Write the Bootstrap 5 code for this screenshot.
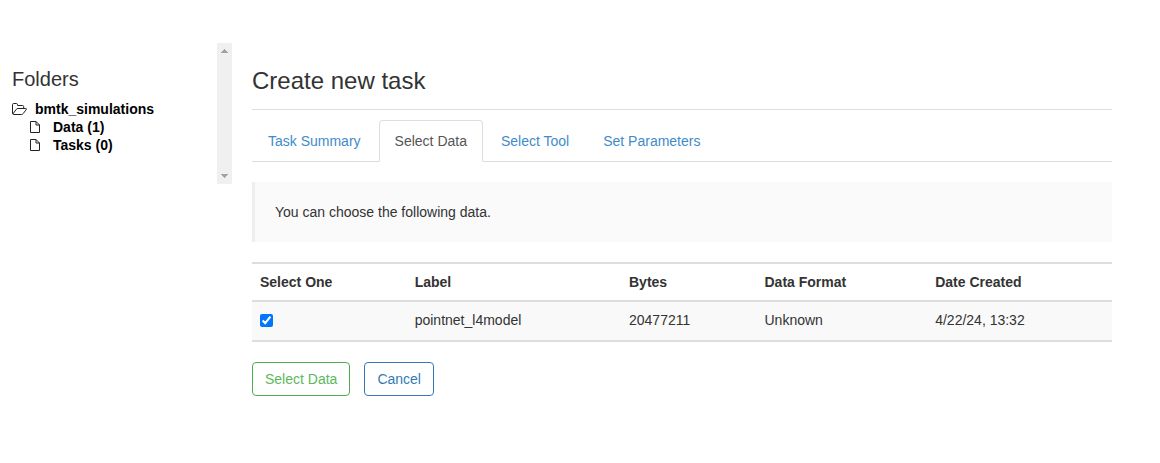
<!DOCTYPE html>
<html lang="en">
<head>
<meta charset="utf-8">
<meta name="viewport" content="width=device-width, initial-scale=1">
<title>Create new task</title>
<link href="https://cdn.jsdelivr.net/npm/bootstrap@5.3.0/dist/css/bootstrap.min.css" rel="stylesheet">
<style>
body{font:14px/20px "Liberation Sans",Arial,sans-serif;color:#333;background:#fff;overflow:hidden}
.page{padding-top:43px}
.side{width:232px;height:141px;flex:none}
.tree{padding:25px 0 0 12px;color:#000;font-weight:700;line-height:18px}
.tree h4{font-size:20px;line-height:22px;font-weight:400;color:#333;margin:0 0 10px}
.tree svg{display:block;flex:none}
.tree-child{margin-left:18px}
.scroller{width:15px;background:#f0f0f0;padding:6px 0}
.main{width:860px;margin-left:20px;padding-top:25px}
.main h3{font-size:24px;line-height:26px;margin:0;padding-bottom:15px;border-bottom:1px solid #ddd;font-weight:400}
.nav-tabs{--bs-nav-tabs-border-color:#ddd;--bs-nav-tabs-border-radius:4px;margin-top:10px}
.nav-tabs .nav-item{margin-right:2px}
.nav-tabs .nav-link{padding:10px 15px;color:#428bca}
.nav-tabs .nav-link.active{color:#555;border-color:#ddd #ddd #fff}
.callout{margin-top:20px;height:60px;padding:20px;background:#fafafa;border-left:3px solid #eee}
.data{margin:20px 0;table-layout:fixed;border-top:2px solid #ddd;border-bottom:2px solid #ddd;--bs-table-color:#333;color:#333}
.data th,.data td{padding:8px;border:0;line-height:20px;color:#333}
.data thead th{height:36px}
.data tbody{border-top:2px solid #ddd}
.data tbody td{background:#f9f9f9;height:40px}
.data input{display:block;width:13px;height:13px;margin:4px 0 3px}
.action{font-size:14px;line-height:20px;padding:6px 12px;border-radius:4px}
.action-ok{color:#5cb85c;border-color:#4cae4c}
.action-no{color:#337ab7;border-color:#337ab7}
.actions{gap:14px}
</style>
</head>
<body>
<div class="page d-flex align-items-start">
  <aside class="side d-flex justify-content-between">
    <div class="tree">
      <h4>Folders</h4>
      <div class="d-flex align-items-center"><svg width="23" height="14" viewBox="0 0 23 14" fill="none" stroke="#222" stroke-linejoin="round"><path d="M.5 11.300V2.700q0-1.200 1.200-1.200h2.600q1.200 0 1.200 1.200v.8h5q1.200 0 1.200 1.200v1.800M.8 12L4.300 7.300q.7-.8 1.700-.8h7.700q1.200 0 .6.900L11.200 11.600q-.7.900-1.700.900H1.700Q.5 12.500.5 11.300"/></svg>bmtk_simulations</div>
      <div class="d-flex align-items-center tree-child"><svg width="23" height="14" viewBox="0 0 23 14" fill="none" stroke="#222" stroke-linejoin="round"><path d="M.5 1.500h5.500l3.500 3.500v7.500H.5zM6 1.500V5h3.500"/></svg>Data (1)</div>
      <div class="d-flex align-items-center tree-child"><svg width="23" height="14" viewBox="0 0 23 14" fill="none" stroke="#222" stroke-linejoin="round"><path d="M.5 1.500h5.500l3.500 3.500v7.500H.5zM6 1.500V5h3.500"/></svg>Tasks (0)</div>
    </div>
    <div class="scroller d-flex flex-column align-items-center justify-content-between">
      <svg width="7" height="4" fill="#a3a3a3" shape-rendering="crispEdges"><path d="M3 0h1v1h1v1h1v1h1v1H0V3h1V2h1V1h1z"/></svg>
      <svg width="7" height="4" fill="#a3a3a3" shape-rendering="crispEdges"><path d="M0 0h7v1H6v1H5v1H4v1H3V3H2V2H1V1H0z"/></svg>
    </div>
  </aside>
  <main class="main">
    <h3>Create new task</h3>
    <ul class="nav nav-tabs">
      <li class="nav-item"><a class="nav-link" href="#">Task Summary</a></li>
      <li class="nav-item"><a class="nav-link active" href="#">Select Data</a></li>
      <li class="nav-item"><a class="nav-link" href="#">Select Tool</a></li>
      <li class="nav-item"><a class="nav-link" href="#">Set Parameters</a></li>
    </ul>
    <div class="callout">You can choose the following data.</div>
    <table class="table data">
      <colgroup><col style="width:154.700px"><col style="width:214.300px"><col style="width:135.500px"><col style="width:170.700px"><col></colgroup>
      <thead><tr><th>Select One</th><th>Label</th><th>Bytes</th><th>Data Format</th><th>Date Created</th></tr></thead>
      <tbody><tr class="align-top"><td><input type="checkbox" checked></td><td>pointnet_l4model</td><td>20477211</td><td>Unknown</td><td>4/22/24, 13:32</td></tr></tbody>
    </table>
    <div class="d-flex actions"><button class="btn action action-ok">Select Data</button><button class="btn action action-no">Cancel</button></div>
  </main>
</div>
<script src="https://cdn.jsdelivr.net/npm/bootstrap@5.3.0/dist/js/bootstrap.bundle.min.js"></script>
</body>
</html>
